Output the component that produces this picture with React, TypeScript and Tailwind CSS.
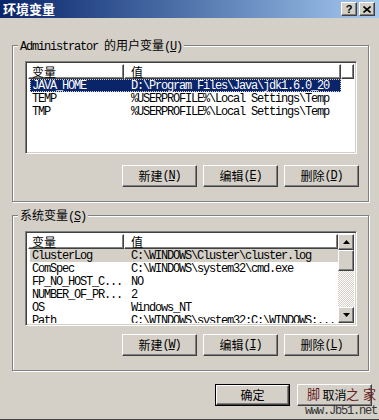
import React from 'react'

const raised =
  'border border-t-white border-l-white border-r-[#404040] border-b-[#404040] shadow-[inset_-1px_-1px_0_#808080]'
const sunken =
  'border border-t-[#808080] border-l-[#808080] border-r-white border-b-white shadow-[inset_1px_1px_0_#404040,inset_-1px_-1px_0_#d4d0c8]'
const mono = "font-['Liberation_Mono',monospace] text-[12px] tracking-[-1.2px]"

type Row = { name: string; value: string; sel?: 'active' | 'inactive' }

const userVars: Row[] = [
  { name: 'JAVA_HOME', value: 'D:\\Program Files\\Java\\jdk1.6.0_20', sel: 'active' },
  { name: 'TEMP', value: '%USERPROFILE%\\Local Settings\\Temp' },
  { name: 'TMP', value: '%USERPROFILE%\\Local Settings\\Temp' },
]

const sysVars: Row[] = [
  { name: 'ClusterLog', value: 'C:\\WINDOWS\\Cluster\\cluster.log', sel: 'inactive' },
  { name: 'ComSpec', value: 'C:\\WINDOWS\\system32\\cmd.exe' },
  { name: 'FP_NO_HOST_C...', value: 'NO' },
  { name: 'NUMBER_OF_PR...', value: '2' },
  { name: 'OS', value: 'Windows_NT' },
  { name: 'Path', value: 'C:\\WINDOWS\\system32;C:\\WINDOWS;...' },
]

const Mnemonic: React.FC<{ k: string }> = ({ k }) => (
  <span className={mono}>
    (<span className="underline underline-offset-1">{k}</span>)
  </span>
)

const Button: React.FC<{ label: string; k?: string; isDefault?: boolean }> = ({ label, k, isDefault }) => (
  <div className={isDefault ? 'border border-black' : ''}>
    <div
      className={`${raised} ${isDefault ? 'w-[73px] h-[20px]' : 'w-[75px] h-[22px]'} flex items-center justify-center leading-[14px] text-black`}
    >
      <span>{label}</span>
      {k && <Mnemonic k={k} />}
    </div>
  </div>
)

const HeaderCell: React.FC<{ w: string; children?: React.ReactNode }> = ({ w, children }) => (
  <div
    className={`${w} h-[15px] border border-t-white border-l-white border-r-[#404040] border-b-[#404040] shadow-[inset_-1px_-1px_0_#808080] pl-[3px] flex items-center leading-[12px]`}
  >
    {children}
  </div>
)

const Rows: React.FC<{ rows: Row[] }> = ({ rows }) => (
  <div>
    {rows.map((r) => (
      <div
        key={r.name}
        className={`ml-[2px] w-[311px] h-[13px] flex items-center whitespace-nowrap ${mono} ${
          r.sel === 'active'
            ? 'bg-[#0a246a] text-white outline outline-1 outline-dotted outline-[#d4d0c8] -outline-offset-1'
            : r.sel === 'inactive'
            ? 'bg-[#d4d0c8] text-black'
            : 'text-black'
        }`}
      >
        <div className="w-[94px] pl-[2px] leading-[12px]">{r.name}</div>
        <div className="pl-[7px] leading-[12px]">{r.value}</div>
      </div>
    ))}
  </div>
)

const Arrow: React.FC<{ up?: boolean }> = ({ up }) => (
  <div className={`${raised} w-[16px] h-[16px] bg-[#d4d0c8] flex items-center justify-center`}>
    <svg width="7" height="4" viewBox="0 0 7 4">
      <path d={up ? 'M3.5 0L7 4H0Z' : 'M0 0H7L3.5 4Z'} fill="#000" />
    </svg>
  </div>
)

const GroupBox: React.FC<{ title: React.ReactNode; h: string; children: React.ReactNode }> = ({ title, h, children }) => (
  <div className={`relative ${h} border border-[#808080] shadow-[inset_1px_1px_0_#fff,1px_1px_0_#fff] pt-[15px] pl-[12px] pr-[10px]`}>
    <div className="absolute -top-[8px] left-[5px] px-[2px] bg-[#d4d0c8] leading-[14px] whitespace-nowrap">{title}</div>
    {children}
  </div>
)

const ButtonRow: React.FC<{ items: [string, string][]; mt: string }> = ({ items, mt }) => (
  <div className={`${mt} -mr-[1px] flex justify-end gap-[6px]`}>
    {items.map(([l, k]) => (
      <Button key={l} label={l} k={k} />
    ))}
  </div>
)

export default function App() {
  return (
    <div className="relative w-[379px] h-[420px] overflow-hidden bg-[#d4d0c8] text-[12px] text-black font-['Noto_Sans_CJK_SC',sans-serif] border-b border-[#404040]">
      {/* title bar */}
      <div className="h-[18px] flex items-center justify-between bg-gradient-to-r from-[#0a246a] to-[#a6caf0] pl-[3px] pr-[4px]">
        <span className="text-white font-bold text-[13px] leading-[16px]">环境变量</span>
        <div className="flex gap-[2px]">
          <div className={`${raised} w-[16px] h-[14px] bg-[#d4d0c8] flex items-center justify-center`}>
            <span className="font-['Liberation_Sans',sans-serif] font-bold text-[11px] leading-none">?</span>
          </div>
          <div className={`${raised} w-[16px] h-[14px] bg-[#d4d0c8] flex items-center justify-center`}>
            <svg width="8" height="7" viewBox="0 0 8 7">
              <path d="M0.5 0.5L7.5 6.5M7.5 0.5L0.5 6.5" stroke="#000" strokeWidth="1.6" />
            </svg>
          </div>
        </div>
      </div>

      <div className="pt-[27px] pl-[12px] w-[369px]">
        {/* user variables */}
        <GroupBox
          h="h-[157px]"
          title={
            <>
              <span className={mono}>Administrator </span>
              <span>的用户变量</span>
              <Mnemonic k="U" />
            </>
          }
        >
          <div className={`${sunken} bg-white w-[332px] h-[93px] p-[2px]`}>
            <div className="flex">
              <HeaderCell w="w-[96px]">变量</HeaderCell>
              <HeaderCell w="w-[217px]">
                <span className="pl-[3px]">值</span>
              </HeaderCell>
              <HeaderCell w="flex-1" />
            </div>
            <Rows rows={userVars} />
          </div>
          <ButtonRow mt="mt-[11px]" items={[['新建', 'N'], ['编辑', 'E'], ['删除', 'D']]} />
        </GroupBox>

        {/* system variables */}
        <div className="mt-[13px]">
          <GroupBox
            h="h-[156px]"
            title={
              <>
                <span>系统变量</span>
                <Mnemonic k="S" />
              </>
            }
          >
            <div className={`${sunken} bg-white w-[332px] h-[95px] p-[2px] flex`}>
              <div className="flex-1 overflow-hidden">
                <div className="flex">
                  <HeaderCell w="w-[96px]">变量</HeaderCell>
                  <HeaderCell w="flex-1">
                    <span className="pl-[3px]">值</span>
                  </HeaderCell>
                </div>
                <Rows rows={sysVars} />
              </div>
              <div className="w-[16px] flex flex-col">
                <Arrow up />
                <div className={`${raised} h-[21px] bg-[#d4d0c8]`} />
                <div className="flex-1 bg-[repeating-conic-gradient(#ffffff_0%_25%,#d4d0c8_0%_50%)] bg-[length:2px_2px]" />
                <Arrow />
              </div>
            </div>
            <ButtonRow mt="mt-[8px]" items={[['新建', 'W'], ['编辑', 'I'], ['删除', 'L']]} />
          </GroupBox>
        </div>

        {/* OK / Cancel */}
        <div className="mt-[13px] flex justify-end gap-[7px] -mr-[3px]">
          <Button label="确定" isDefault />
          <Button label="取消" />
        </div>
      </div>

      {/* watermark */}
      <div className="absolute left-[307px] top-[386px] text-[13px] leading-[16px] text-[#6a1f1f] whitespace-nowrap pointer-events-none">
        脚<span className="inline-block w-[26px]" />之<span className="inline-block w-[4px]" />家
      </div>
      <div className={`absolute right-[2px] top-[405px] ${mono} leading-[12px] text-[#333] pointer-events-none`}>
        www.Jb51.net
      </div>
    </div>
  )
}
